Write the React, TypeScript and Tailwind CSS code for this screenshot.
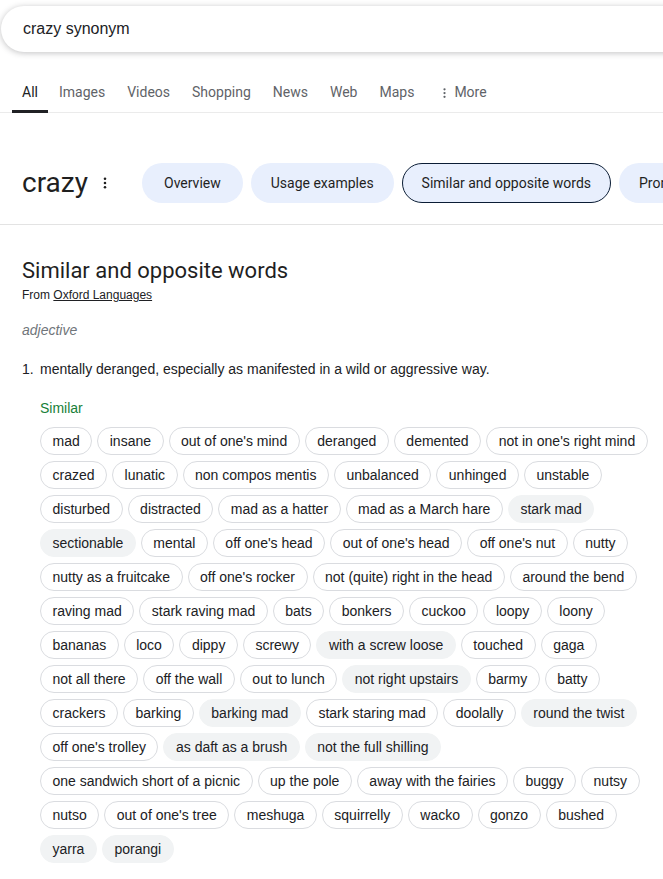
import React from "react";

type Chip = { t: string; h?: boolean };

const chips: Chip[] = [
  { t: "mad" }, { t: "insane" }, { t: "out of one's mind" }, { t: "deranged" }, { t: "demented" }, { t: "not in one's right mind" },
  { t: "crazed" }, { t: "lunatic" }, { t: "non compos mentis" }, { t: "unbalanced" }, { t: "unhinged" }, { t: "unstable" },
  { t: "disturbed" }, { t: "distracted" }, { t: "mad as a hatter" }, { t: "mad as a March hare" }, { t: "stark mad", h: true },
  { t: "sectionable", h: true }, { t: "mental" }, { t: "off one's head" }, { t: "out of one's head" }, { t: "off one's nut" }, { t: "nutty" },
  { t: "nutty as a fruitcake" }, { t: "off one's rocker" }, { t: "not (quite) right in the head" }, { t: "around the bend" },
  { t: "raving mad" }, { t: "stark raving mad" }, { t: "bats" }, { t: "bonkers" }, { t: "cuckoo" }, { t: "loopy" }, { t: "loony" },
  { t: "bananas" }, { t: "loco" }, { t: "dippy" }, { t: "screwy" }, { t: "with a screw loose", h: true }, { t: "touched" }, { t: "gaga" },
  { t: "not all there" }, { t: "off the wall" }, { t: "out to lunch" }, { t: "not right upstairs", h: true }, { t: "barmy" }, { t: "batty" },
  { t: "crackers" }, { t: "barking" }, { t: "barking mad", h: true }, { t: "stark staring mad" }, { t: "doolally" }, { t: "round the twist", h: true },
  { t: "off one's trolley" }, { t: "as daft as a brush", h: true }, { t: "not the full shilling", h: true },
  { t: "one sandwich short of a picnic" }, { t: "up the pole" }, { t: "away with the fairies" }, { t: "buggy" }, { t: "nutsy" },
  { t: "nutso" }, { t: "out of one's tree" }, { t: "meshuga" }, { t: "squirrelly" }, { t: "wacko" }, { t: "gonzo" }, { t: "bushed" },
  { t: "yarra", h: true }, { t: "porangi", h: true },
];

const tabs = ["All", "Images", "Videos", "Shopping", "News", "Web", "Maps"];

function Dots({ cls }: { cls: string }) {
  return (
    <svg className={cls} viewBox="0 0 4 14" fill="currentColor">
      <circle cx="2" cy="2" r="1.5" />
      <circle cx="2" cy="7" r="1.5" />
      <circle cx="2" cy="12" r="1.5" />
    </svg>
  );
}

export default function App() {
  return (
    <div className="w-[663px] h-[879px] bg-white overflow-hidden text-[#202124]" style={{ fontFamily: "Roboto, sans-serif" }}>
      {/* search bar */}
      <div className="pt-[6px] pl-[1px]">
        <div className="h-[46px] w-[720px] rounded-full bg-white shadow-[0_1px_6px_rgba(32,33,36,0.28)] flex items-center pl-[22px] text-[16px] text-[#202124] font-['Liberation_Sans',Arial,sans-serif]">
          crazy synonym
        </div>
      </div>

      {/* tabs */}
      <div className="mt-[20px] h-[41px] border-b border-[#ebebeb] flex items-stretch pl-[12px] text-[14px]">
        {tabs.map((t, i) => (
          <div key={t} className={`relative flex items-center pt-[1px] ${i === 0 ? "px-[10px] text-[#202124]" : "px-[11px] text-[#5f6368]"}`}>
            {t}
            {i === 0 && <div className="absolute left-0 right-0 bottom-[-1px] h-[3px] bg-[#202124]" />}
          </div>
        ))}
        <div className="flex items-center pt-[1px] ml-[18px] text-[#5f6368]">
          <Dots cls="w-[3px] h-[12px] mr-[8px]" />
          More
        </div>
      </div>

      {/* crazy row */}
      <div className="border-b border-[#e3e3e3] pt-[50px] pb-[21px] flex items-center">
        <div className="shrink-0 pl-[22px] text-[28px] leading-[40px] text-[#1f1f1f] w-[120px] flex items-center">
          <span>crazy</span>
          <Dots cls="w-[4px] h-[12px] ml-[15px] text-[#1f1f1f]" />
        </div>
        <div className="flex gap-[8px] ml-[22px] text-[14px] text-[#1f1f1f] whitespace-nowrap">
          <div className="shrink-0 h-[40px] px-[22px] rounded-full bg-[#e8effd] flex items-center">Overview</div>
          <div className="shrink-0 h-[40px] px-[20px] rounded-full bg-[#e8effd] flex items-center">Usage examples</div>
          <div className="shrink-0 h-[40px] px-[19px] rounded-full bg-[#e8effd] border border-[#0b1d35] flex items-center">Similar and opposite words</div>
          <div className="shrink-0 h-[40px] px-[20px] rounded-full bg-[#e8effd] flex items-center">Pronunciation</div>
        </div>
      </div>

      {/* section */}
      <div className="pl-[22px]">
        <div className="mt-[32px] text-[22px] leading-[28px] text-[#1f1f1f]">Similar and opposite words</div>
        <div className="mt-[2px] text-[12px] leading-[16px] text-[#202124] font-['Liberation_Sans',Arial,sans-serif]">
          From <span className="underline">Oxford Languages</span>
        </div>
        <div className="mt-[17px] text-[14px] leading-[20px] italic text-[#70757a] font-['Liberation_Sans',Arial,sans-serif]">adjective</div>
        <div className="mt-[19px] flex text-[14px] leading-[20px] text-[#202124] font-['Liberation_Sans',Arial,sans-serif]">
          <span className="w-[18px]">1.</span>
          <span>mentally deranged, especially as manifested in a wild or aggressive way.</span>
        </div>
        <div className="pl-[18px] font-['Liberation_Sans',Arial,sans-serif]">
          <div className="mt-[19px] text-[14px] leading-[20px] text-[#188038]">Similar</div>
          <div className="mt-[9px] w-[614px] flex flex-wrap gap-x-[5px] gap-y-[6px]">
            {chips.map((c) => (
              <div
                key={c.t}
                className={`h-[28px] px-[11.5px] rounded-full border flex items-center text-[14px] text-[#202124] whitespace-nowrap ${
                  c.h ? "bg-[#f1f3f4] border-[#f1f3f4]" : "bg-white border-[#dadce0]"
                }`}
              >
                {c.t}
              </div>
            ))}
          </div>
        </div>
      </div>
    </div>
  );
}
